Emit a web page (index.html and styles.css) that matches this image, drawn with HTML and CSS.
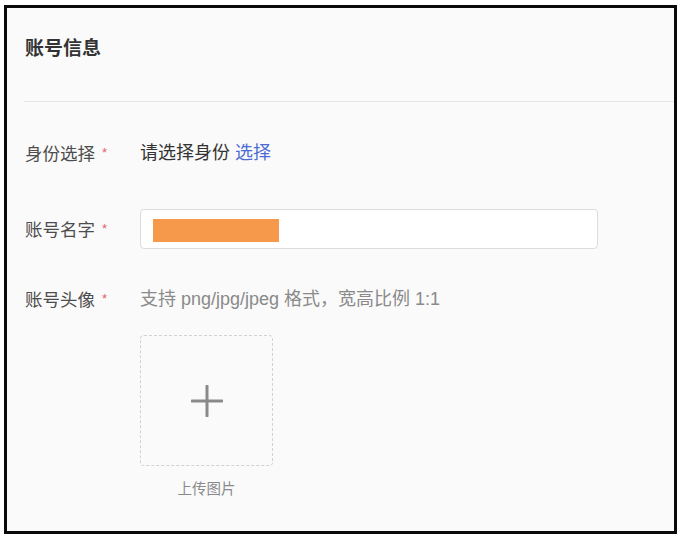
FILE: index.html
```html
<!DOCTYPE html>
<html lang="zh-CN">
<head>
<meta charset="utf-8">
<title>账号信息</title>
<link rel="stylesheet" href="styles.css">
</head>
<body>
<div class="frame">
  <div class="section">
    <div class="header"><span class="title">账号信息</span></div>
    <div class="form">
      <div class="row row-identity">
        <div class="label">身份选择<span class="req">*</span></div>
        <div class="value">请选择身份 <a class="link">选择</a></div>
      </div>
      <div class="row row-name">
        <div class="label">账号名字<span class="req">*</span></div>
        <div class="value">
          <div class="input"><span class="redact"></span></div>
        </div>
      </div>
      <div class="row row-avatar">
        <div class="label">账号头像<span class="req">*</span></div>
        <div class="value">
          <div class="hint">支持 png/jpg/jpeg 格式，宽高比例 1:1</div>
          <div class="upload">
            <div class="upload-box">
              <svg class="plus" width="32" height="32" viewBox="0 0 32 32"><path d="M16 1v30M1 16h30" stroke="#8a8a8a" stroke-width="3" stroke-linecap="round" fill="none"/></svg>
            </div>
            <div class="upload-text">上传图片</div>
          </div>
        </div>
      </div>
    </div>
  </div>
</div>
</body>
</html>
```

FILE: styles.css
```css
html, body {
  margin: 0;
  padding: 0;
  background: #ffffff;
}
body {
  font-family: "Liberation Sans", "Noto Sans CJK SC", sans-serif;
  color: #333;
}
.frame {
  box-sizing: border-box;
  margin: 5px 0 0 4px;
  width: 673px;
  height: 529px;
  border: 3px solid #0a0a0a;
  background: #fafafa;
  overflow: hidden;
}
.section {
  padding-left: 17px;
}
.header {
  box-sizing: border-box;
  height: 94px;
  padding-top: 27px;
  border-bottom: 1px solid #e6e6e6;
}
.title {
  display: block;
  font-size: 19px;
  line-height: 28px;
  font-weight: bold;
  color: #333;
  padding-left: 1px;
}
.form {
  display: flex;
  flex-direction: column;
}
.row {
  display: grid;
  grid-template-columns: 116px 1fr;
  align-items: start;
}
.row-identity { margin-top: 31px; }
.row-name { margin-top: 35px; }
.row-avatar { margin-top: 29px; }
.label {
  font-size: 17.5px;
  line-height: 40px;
  color: #4d4d4d;
  padding-left: 1px;
  white-space: nowrap;
}
.req {
  color: #e46473;
  font-size: 13px;
  margin-left: 7px;
  vertical-align: 3px;
}
.value {
  font-size: 18px;
  line-height: 40px;
  color: #333;
}
.link {
  color: #4f6cd6;
  text-decoration: none;
  cursor: pointer;
}
.input {
  box-sizing: border-box;
  width: 458px;
  height: 40px;
  border: 1px solid #dcdcdc;
  border-radius: 4px;
  background: #fff;
  padding: 9px 0 0 12px;
}
.redact {
  display: block;
  width: 126px;
  height: 23px;
  background: #f7994a;
}
.hint {
  color: #8a8a8a;
}
.upload {
  display: flex;
  flex-direction: column;
  align-items: center;
  width: 133px;
  margin-top: 16px;
}
.upload-box {
  box-sizing: border-box;
  width: 133px;
  height: 131px;
  border: 1px dashed #d2d2d2;
  border-radius: 4px;
  display: flex;
  align-items: center;
  justify-content: center;
}
.upload-text {
  margin-top: 13px;
  font-size: 14.5px;
  line-height: 20px;
  color: #8a8a8a;
}
```
